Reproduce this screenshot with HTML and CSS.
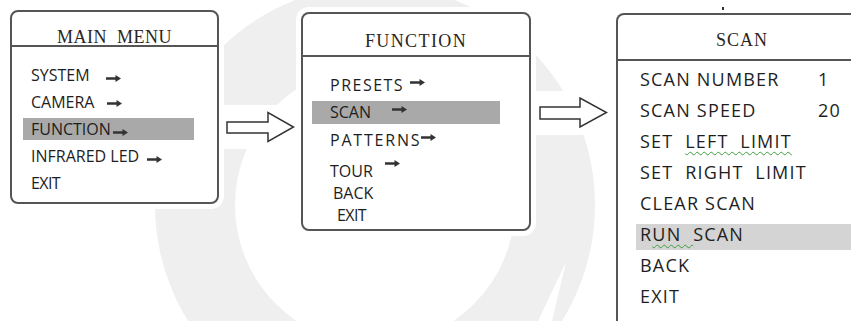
FILE: index.html
```html
<!DOCTYPE html>
<html lang="en">
<head>
  <meta charset="UTF-8">
  <meta name="viewport" content="width=device-width, initial-scale=1.0">
  <title>Menu - Scan</title>
  <link rel="stylesheet" href="styles.css">
</head>
<body>
  <svg class="defs" width="0" height="0">
    <symbol id="arr" viewBox="0 0 15 7">
      <path d="M0 2.3h9.5V0L15 3.5 9.5 7V4.7H0z" fill="#333"/>
    </symbol>
  </svg>

  <svg class="watermark" width="851" height="321" viewBox="0 0 851 321">
    <circle cx="375" cy="205" r="180" fill="none" stroke="#efefef" stroke-width="80"/>
    <path d="M566 262L538 321H552Z" fill="#fff"/>
  </svg>

  <div class="flow">
    <div class="menu menu-main">
      <div class="menu-title">MAIN  MENU</div>
      <ul class="menu-list">
        <li class="item">SYSTEM    <svg class="arr"><use href="#arr"/></svg></li>
        <li class="item">CAMERA   <svg class="arr arr-cam"><use href="#arr"/></svg></li>
        <li class="item on">FUNCTION<svg class="arr arr-tight"><use href="#arr"/></svg></li>
        <li class="item">INFRARED LED  <svg class="arr"><use href="#arr"/></svg></li>
        <li class="item tight">EXIT</li>
      </ul>
    </div>

    <div class="step step-1">
      <svg width="69" height="32" viewBox="0 0 69 32"><path d="M1 11H42V1.5L67.5 16 42 30.5V22H1Z" fill="#fff" stroke="#333" stroke-width="1.5"/></svg>
    </div>

    <div class="menu menu-func">
      <div class="menu-title">FUNCTION</div>
      <ul class="menu-list">
        <li class="item spaced">PRESETS <svg class="arr arr-mid"><use href="#arr"/></svg></li>
        <li class="item on">SCAN     <svg class="arr arr-mid"><use href="#arr"/></svg></li>
        <li class="item wide">PATTERNS<svg class="arr arr-mid"><use href="#arr"/></svg></li>
        <li class="item tour">TOUR   <svg class="arr arr-up"><use href="#arr"/></svg></li>
        <li class="item back">BACK</li>
        <li class="item exit tight">EXIT</li>
      </ul>
    </div>

    <div class="step step-2">
      <svg width="69" height="32" viewBox="0 0 69 32"><path d="M1 10H41V1L67.5 15.5 41 30V22H1Z" fill="#fff" stroke="#333" stroke-width="1.5"/></svg>
    </div>

    <div class="menu menu-scan">
      <div class="menu-title">SCAN</div>
      <ul class="menu-list">
        <li class="item"><span>SCAN NUMBER</span><span>1</span></li>
        <li class="item"><span>SCAN SPEED</span><span>20</span></li>
        <li class="item"><span>SET  <span class="typo">LEFT  LIMIT</span></span></li>
        <li class="item"><span>SET  RIGHT  LIMIT</span></li>
        <li class="item"><span>CLEAR SCAN</span></li>
        <li class="item on"><span>R<span class="typo">UN  </span>SCAN</span></li>
        <li class="item"><span>BACK</span></li>
        <li class="item"><span>EXIT</span></li>
      </ul>
    </div>
  </div>
</body>
</html>
```

FILE: styles.css
```css
html, body {
  margin: 0;
  height: 321px;
  overflow: hidden;
  background: #fff;
}
body {
  position: relative;
  font-family: "Open Sans", sans-serif;
  color: #1e1e1e;
}
.defs { position: absolute; }
.watermark {
  position: absolute;
  left: 0;
  top: 0;
}
.flow {
  position: relative;
  display: flex;
  align-items: flex-start;
  padding-left: 10px;
}
.flow > * { flex-shrink: 0; }

.menu {
  box-sizing: border-box;
  background: #fff;
  border: 2px solid #555;
  border-radius: 8px;
  box-shadow: 0 0 0 5px #fff;
}
.menu-title {
  font-family: "Liberation Serif", serif;
  font-size: 18px;
  line-height: 15px;
  text-align: center;
  white-space: pre;
  color: #2b2622;
  border-bottom: 2px solid #555;
}
.menu-list {
  list-style: none;
  margin: 0;
  display: flex;
  flex-direction: column;
}
.item {
  white-space: pre;
  font-size: 16px;
  line-height: 22px;
}
.item.tight { letter-spacing: -0.6px; }
.arr {
  width: 15px;
  height: 7px;
  vertical-align: -1px;
}
.arr-cam { vertical-align: 1px; }
.arr-tight { margin-left: 2px; }
.arr-mid { vertical-align: 5px; }
.arr-up { vertical-align: 10px; }

/* main menu */
.menu-main {
  width: 209px;
  height: 194px;
  margin-top: 10px;
}
.menu-main .menu-title {
  padding-top: 18px;
  letter-spacing: 0.5px;
}
.menu-main .menu-list {
  gap: 5px;
  padding: 17px 23px 0 11px;
}
.menu-main .item { padding-left: 8px; }
.menu-main .item.on { background: #a9a9a9; }

.step {
  background: #fff;
  box-shadow: 0 0 0 6px #fff;
  line-height: 0;
}
.step-1 { margin: 111px 0 0 7px; }
.step-2 { margin: 97px 0 0 8px; }

/* function */
.menu-func {
  width: 230px;
  height: 219px;
  margin: 12px 0 0 6px;
}
.menu-func .menu-title {
  padding: 19px 0 6px;
  line-height: 16px;
  letter-spacing: 1.4px;
}
.menu-func .menu-list {
  padding: 17px 29px 0 9px;
}
.menu-func .item {
  padding-left: 18px;
  line-height: 23px;
}
.menu-func .item.on {
  background: #a9a9a9;
  margin-top: 4px;
}
.menu-func .spaced { letter-spacing: 1.5px; }
.menu-func .wide {
  letter-spacing: 1.8px;
  margin-top: 5px;
}
.menu-func .tour { margin-top: 8px; }
.menu-func .back {
  line-height: 21px;
  padding-left: 21px;
}
.menu-func .exit {
  line-height: 22px;
  padding-left: 25px;
}

/* scan */
.menu-scan {
  position: relative;
  width: 252px;
  height: 308px;
  margin: 13px 0 0 8px;
  border-bottom: none;
  border-radius: 8px 8px 0 0;
}
.menu-scan::before {
  content: "";
  position: absolute;
  left: 104px;
  top: -8px;
  width: 2px;
  height: 3px;
  background: #333;
}
.menu-scan .menu-title {
  padding: 17px 0 11px;
  line-height: 16px;
  letter-spacing: 1px;
}
.menu-scan .menu-list {
  gap: 5px;
  padding: 8px 0 0 18px;
}
.menu-scan .item {
  display: grid;
  grid-template-columns: 178px auto;
  padding: 0 0 6px 4px;
  font-size: 18px;
  line-height: 20px;
  letter-spacing: 1.2px;
}
.menu-scan .item > span:first-child { white-space: pre; }
.menu-scan .item.on { background: #d4d4d4; }
.typo {
  text-decoration: underline wavy #3aa03a;
  text-decoration-thickness: 1px;
  text-underline-offset: 3px;
}
```
